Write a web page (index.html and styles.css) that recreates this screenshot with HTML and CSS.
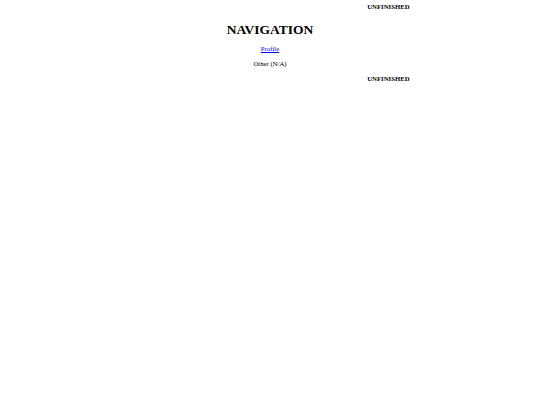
FILE: index.html
```html
<!DOCTYPE html>
<html>
<head>
<meta charset="utf-8">
<title>Navigation</title>
<link rel="stylesheet" href="styles.css">
</head>
<body>
<div class="status">UNFINISHED</div>
<h1 class="title">NAVIGATION</h1>
<a class="nav-link" href="#">Profile</a>
<p class="nav-item">Other (N/A)</p>
<p class="status status-end">UNFINISHED</p>
</body>
</html>
```

FILE: styles.css
```css
body {
  margin: 3.375px;
  font-family: "Liberation Serif", "Times New Roman", serif;
  font-size: 6.75px;
  line-height: 8px;
  color: #000;
  background: #fff;
}
.status {
  font-weight: bold;
  text-align: right;
  padding-right: 127px;
}
.status-end {
  margin: 6.6px 0;
}
.title {
  font-size: 13.5px;
  line-height: 16px;
  font-weight: bold;
  text-align: center;
  margin: 10.2px 0 7.8px;
}
.nav-link {
  display: block;
  width: max-content;
  margin: 0 auto;
  color: #0000ee;
  text-decoration: underline;
}
.nav-item {
  text-align: center;
  margin: 6.6px 0;
}
```
